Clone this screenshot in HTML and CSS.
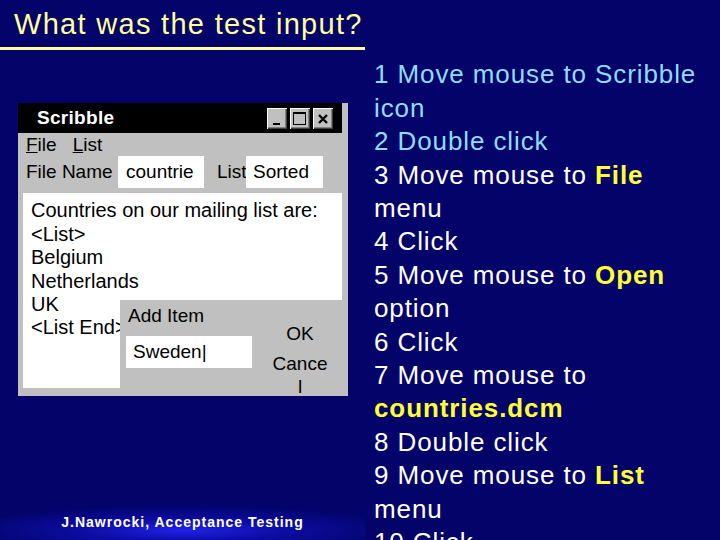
FILE: index.html
```html
<!DOCTYPE html>
<html lang="en">
<head>
<meta charset="utf-8">
<title>What was the test input?</title>
<link rel="stylesheet" href="styles.css">
</head>
<body>
<div class="slide">
  <h1 class="title">What was the test input?</h1>
  <div class="content">
    <div class="left">
      <div class="window">
        <div class="titlebar">
          <span class="wtitle">Scribble</span>
          <div class="wbtns">
            <span class="wbtn"><svg width="20" height="21" viewBox="0 0 20 21"><rect x="6" y="15" width="7" height="2" fill="#000"/></svg></span>
            <span class="wbtn"><svg width="20" height="21" viewBox="0 0 20 21"><rect x="3.5" y="4.5" width="12" height="12" fill="none" stroke="#000" stroke-width="1"/><rect x="3" y="4" width="13" height="2" fill="#000"/></svg></span>
            <span class="wbtn"><svg width="20" height="21" viewBox="0 0 20 21"><path d="M6 7 L14 15 M14 7 L6 15" stroke="#000" stroke-width="2.3" fill="none"/></svg></span>
          </div>
        </div>
        <div class="menubar"><span><u>F</u>ile</span><span class="menu2"><u>L</u>ist</span></div>
        <div class="fields">
          <span class="lbl lbl-name">File Name</span>
          <span class="box box-file">countrie</span>
          <span class="lbl lbl-list">List</span>
          <span class="box box-list">Sorted</span>
        </div>
        <div class="doc">
          <div class="doc-lines">
            <div>Countries on our mailing list are:</div>
            <div>&lt;List&gt;</div>
            <div>Belgium</div>
            <div>Netherlands</div>
            <div>UK</div>
            <div>&lt;List End&gt;</div>
          </div>
          <div class="dialog">
            <div class="dlg-main">
              <div class="dlg-label">Add Item</div>
              <div class="dlg-input">Sweden|</div>
            </div>
            <div class="dlg-buttons">
              <div class="dlg-ok">OK</div>
              <div class="dlg-cancel">Cancel</div>
            </div>
          </div>
        </div>
      </div>
      <div class="footer">J.Nawrocki, Acceptance Testing</div>
    </div>
    <ol class="steps">
      <li class="cyan">1 Move mouse to Scribble icon</li>
      <li class="cyan">2 Double click</li>
      <li>3 Move mouse to <b>File</b> menu</li>
      <li>4 Click</li>
      <li>5 Move mouse to <b>Open</b> option</li>
      <li>6 Click</li>
      <li>7 Move mouse to <b>countries.dcm</b></li>
      <li>8 Double click</li>
      <li>9 Move mouse to <b>List</b> menu</li>
      <li>10 Click</li>
    </ol>
  </div>
</div>
</body>
</html>
```
FILE: styles.css
```css
html, body {
  margin: 0;
  padding: 0;
}
body {
  width: 720px;
  height: 540px;
  overflow: hidden;
  background: #030369;
  font-family: "Liberation Sans", Arial, sans-serif;
}
.slide {
  width: 720px;
  height: 540px;
  display: flex;
  flex-direction: column;
}
.title {
  box-sizing: border-box;
  flex: none;
  margin: 0;
  width: 365px;
  height: 50px;
  padding: 4px 0 0 14px;
  border-bottom: 3px solid #ffff99;
  font-weight: normal;
  font-size: 29px;
  letter-spacing: 1.3px;
  line-height: 40px;
  color: #ffff99;
  white-space: nowrap;
}
.content {
  flex: 1;
  display: grid;
  grid-template-columns: 365px 1fr;
  grid-template-rows: minmax(0, 1fr);
  min-height: 0;
}
.left {
  display: flex;
  flex-direction: column;
  min-height: 0;
}
.window {
  margin: 53px 0 0 18px;
  width: 330px;
  padding-bottom: 8px;
  background: #c0c0c0;
  color: #000;
}
.titlebar {
  height: 30px;
  margin-right: 6px;
  background: #000;
  display: flex;
  align-items: center;
  padding: 0 9px 0 19px;
}
.wtitle {
  flex: 1;
  color: #fff;
  font-weight: bold;
  font-size: 19px;
  letter-spacing: 0.3px;
  line-height: 30px;
}
.wbtns {
  display: flex;
  gap: 3px;
  margin-top: 1px;
}
.wbtn {
  width: 20px;
  height: 21px;
  background: #c0c0c0;
  box-shadow: inset 1px 1px #ffffff, inset -1px -1px #404040, inset -2px -2px #808080;
}
.wbtn svg {
  display: block;
}
.menubar {
  height: 23px;
  padding-left: 8px;
  font-size: 19px;
  line-height: 23px;
  display: flex;
}
.menu2 {
  margin-left: 16px;
}
.fields {
  height: 32px;
  display: flex;
  font-size: 19px;
  line-height: 32px;
  white-space: nowrap;
}
.lbl-name {
  width: 92px;
  padding-left: 8px;
}
.box {
  background: #fff;
  overflow: hidden;
}
.box-file {
  width: 78px;
  padding-left: 8px;
}
.lbl-list {
  width: 29px;
  margin-left: 13px;
  overflow: hidden;
}
.box-list {
  width: 70px;
  padding-left: 7px;
}
.doc {
  position: relative;
  margin: 5px 6px 0 5px;
  height: 195px;
  background: #fff;
  font-size: 20px;
}
.doc-lines {
  padding: 6.4px 0 0 8px;
  line-height: 23.4px;
  white-space: nowrap;
}
.dialog {
  position: absolute;
  left: 97px;
  top: 107px;
  right: -6px;
  bottom: -8px;
  background: #c0c0c0;
  overflow: hidden;
  display: flex;
  padding-top: 4px;
  font-size: 19px;
}
.dlg-main {
  margin-left: 6px;
  width: 126px;
}
.dlg-label {
  margin-left: 2px;
  line-height: 23px;
}
.dlg-input {
  margin-top: 9px;
  height: 32px;
  line-height: 32px;
  padding-left: 7px;
  background: #fff;
}
.dlg-buttons {
  margin-left: 19.5px;
  width: 57px;
  padding-top: 17.9px;
  text-align: center;
  line-height: 23px;
}
.dlg-ok {
  margin-bottom: 7px;
}
.dlg-cancel {
  word-break: break-all;
}
.footer {
  margin-top: auto;
  height: 20px;
  padding: 7px 0 8px;
  text-align: center;
  color: #fff;
  font-weight: bold;
  font-size: 14px;
  letter-spacing: 1px;
  line-height: 20px;
  background: radial-gradient(ellipse 62% 70% at 50% 72%, rgba(36, 36, 250, 0.9) 0%, rgba(20, 20, 210, 0.55) 45%, rgba(3, 3, 105, 0) 100%);
}
.steps {
  list-style: none;
  margin: 0;
  padding: 8.3px 0 0 9px;
  width: 330px;
  font-size: 26px;
  letter-spacing: 0.9px;
  line-height: 33.4px;
  color: #fff;
}
.steps li.cyan {
  color: #8fdcff;
}
.steps b {
  color: #ffff33;
}
```
